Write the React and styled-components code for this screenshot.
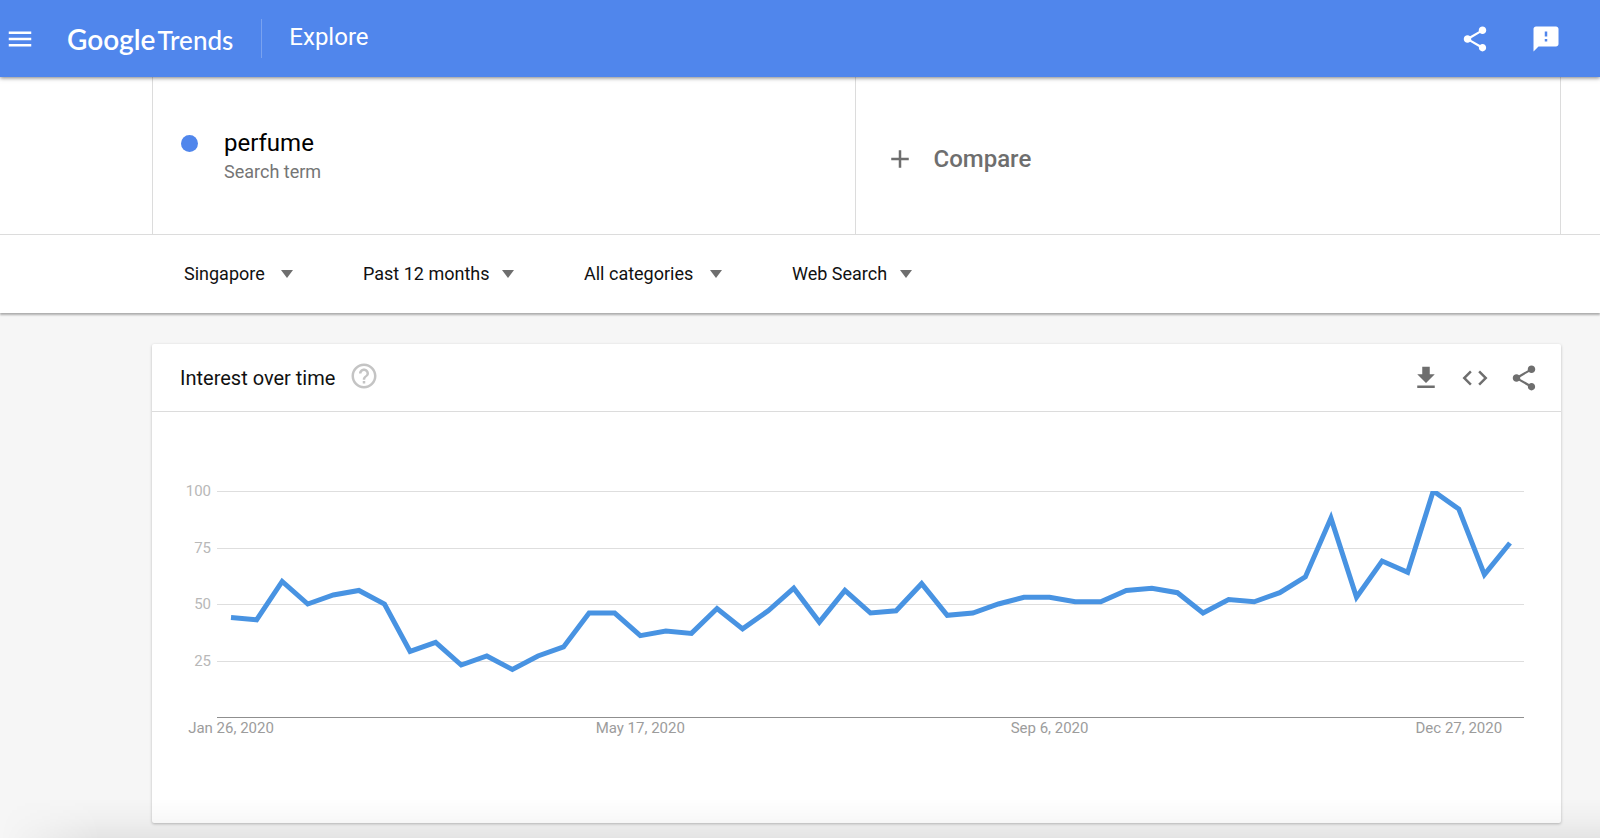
import React from "react";
import {
  MdAdd,
  MdCode,
  MdFeedback,
  MdFileDownload,
  MdHelpOutline,
  MdMenu,
  MdShare
} from "react-icons/md";
import styled, { createGlobalStyle } from "styled-components";

const GlobalStyle = createGlobalStyle`
  * {
    box-sizing: border-box;
  }

  body {
    margin: 0;
    background: #f6f6f6;
    color: #111;
    font-family: Roboto, "Liberation Sans", sans-serif;
  }
`;

const Page = styled.div`
  min-height: 100vh;
`;

const Header = styled.header`
  position: relative;
  display: flex;
  align-items: center;
  height: 77px;
  padding: 0 39px 0 5px;
  background: #5086ec;
  color: #fff;
  box-shadow: 0 1px 4px rgba(0, 0, 0, 0.5);
`;

const IconButton = styled.button`
  display: flex;
  padding: 0;
  border: 0;
  background: none;
  color: inherit;
  font-size: 30px;
  cursor: pointer;
`;

const Logo = styled.a`
  display: flex;
  align-items: baseline;
  gap: 2px;
  margin-left: 32px;
  color: inherit;
  font-family: Lato, sans-serif;
  font-size: 26px;
  font-weight: 500;
  text-decoration: none;
`;

const LogoName = styled.span`
  font-size: 28px;
  font-weight: 600;
`;

const PageTitle = styled.h1`
  display: flex;
  align-items: center;
  height: 39px;
  margin: 0 auto 0 28px;
  padding: 0 0 4px 27px;
  border-left: 1px solid #79a2f0;
  font-size: 24px;
  font-weight: 400;
`;

const Actions = styled.div`
  display: flex;
  gap: ${({ $gap }) => $gap}px;
`;

const Controls = styled.section`
  background: #fff;
  box-shadow: 0 2px 2px rgba(0, 0, 0, 0.3);
`;

const Terms = styled.div`
  display: grid;
  grid-template-columns: calc(50% - 2px) 1fr;
  padding: 0 39px 0 152px;
  border-bottom: 1px solid #dcdcdc;
`;

const Term = styled.div`
  display: flex;
  gap: 26px;
  min-height: 157px;
  padding: 51px 28px 48px;
  border-left: 1px solid #dcdcdc;
`;

const Dot = styled.span`
  width: 17px;
  height: 17px;
  margin-top: 7px;
  border-radius: 50%;
  background: #5086ec;
`;

const TermName = styled.div`
  color: #000;
  font-size: 24px;
  line-height: 30px;
`;

const TermKind = styled.div`
  color: #757575;
  font-size: 18px;
  line-height: 28px;
`;

const CompareButton = styled.button`
  display: flex;
  align-items: center;
  gap: 19px;
  padding: 6px 29px 0;
  border: 0;
  border-left: 1px solid #dcdcdc;
  border-right: 1px solid #dcdcdc;
  background: none;
  color: #6e6e6e;
  font-family: inherit;
  font-size: 24px;
  font-weight: 500;
  cursor: pointer;
`;

const Filters = styled.div`
  display: flex;
  align-items: center;
  flex-wrap: wrap;
  gap: 70px;
  min-height: 78px;
  padding: 0 39px 0 184px;
`;

const Filter = styled.label`
  display: flex;
  align-items: center;
  gap: ${({ $wide }) => ($wide ? 16 : 12)}px;
  color: #6e6e6e;
`;

const Select = styled.select`
  appearance: none;
  padding: 0;
  border: 0;
  background: none;
  color: #111;
  font-family: inherit;
  font-size: 18px;
  line-height: 28px;
`;

const Card = styled.section`
  margin: 31px 39px 15px 152px;
  border-radius: 2px;
  background: #fff;
  box-shadow: 0 1px 3px rgba(0, 0, 0, 0.25);
`;

const CardHeader = styled.div`
  display: flex;
  align-items: center;
  gap: 14px;
  min-height: 68px;
  padding: 0 22px 0 28px;
  border-bottom: 1px solid #dcdcdc;
  color: #6e6e6e;
`;

const CardTitle = styled.h2`
  margin: 0;
  color: #111;
  font-size: 20px;
  font-weight: 400;
`;

const HelpButton = styled(IconButton)`
  margin: 0 auto 4px 0;
  color: #c4c4c4;
`;

const CardBody = styled.div`
  padding: 79px 37px 80px 65px;
`;

const Chart = styled.svg`
  display: block;
  width: 100%;
  height: 252px;
  overflow: visible;
`;

const GridLine = styled.line`
  stroke: ${({ $axis }) => ($axis ? "#8f8f8f" : "#dedede")};
  shape-rendering: crispEdges;
`;

const AxisLabel = styled.text`
  fill: ${({ $muted }) => ($muted ? "#b8b8b8" : "#9c9c9c")};
  font-size: 15px;
`;

// soft fade along the bottom edge of the window
const BottomShade = styled.div`
  position: fixed;
  right: 0;
  bottom: 0;
  left: 0;
  height: 40px;
  background: linear-gradient(
    transparent,
    rgba(0, 0, 0, 0.025) 50%,
    rgba(0, 0, 0, 0.07)
  );
  mask-image: linear-gradient(to right, transparent, #000 100px);
  pointer-events: none;
`;

const filters = [
  { name: "Region", value: "Singapore", wide: true },
  { name: "Time range", value: "Past 12 months" },
  { name: "Category", value: "All categories", wide: true },
  { name: "Search type", value: "Web Search" }
];

// weekly values
const interest = [
  44, 43, 60, 50, 54, 56, 50, 29, 33, 23, 27, 21, 27, 31, 46, 46, 36,
  38, 37, 48, 39, 47, 57, 42, 56, 46, 47, 59, 45, 46, 50, 53, 53, 51,
  51, 56, 57, 55, 46, 52, 51, 55, 62, 88, 53, 69, 64, 100, 92, 63, 77
];

const dates = [
  { week: 0, text: "Jan 26, 2020" },
  { week: 16, text: "May 17, 2020" },
  { week: 32, text: "Sep 6, 2020" },
  { week: 48, text: "Dec 27, 2020" }
];

const PLOT_WIDTH = 1307;
const PLOT_HEIGHT = 226;
const PLOT_INSET = 14;

const xOf = week =>
  PLOT_INSET +
  (week * (PLOT_WIDTH - 2 * PLOT_INSET)) / (interest.length - 1);
const yOf = value => Math.round(PLOT_HEIGHT * (1 - value / 100));

const points = interest
  .map((value, week) => `${xOf(week)},${PLOT_HEIGHT * (1 - value / 100)}`)
  .join(" ");

const InterestChart = () => (
  <Chart role="img" aria-label="Interest over time for perfume">
    {[100, 75, 50, 25, 0].map(value => (
      <GridLine
        key={value}
        $axis={value === 0}
        x1="0"
        x2="100%"
        y1={yOf(value)}
        y2={yOf(value)}
      />
    ))}
    {[100, 75, 50, 25].map(value => (
      <AxisLabel
        key={value}
        $muted
        x="-6"
        y={yOf(value) + 5}
        textAnchor="end"
      >
        {value}
      </AxisLabel>
    ))}
    <svg
      width="100%"
      height={PLOT_HEIGHT}
      viewBox={`0 0 ${PLOT_WIDTH} ${PLOT_HEIGHT}`}
      preserveAspectRatio="none"
    >
      <polyline
        points={points}
        fill="none"
        stroke="#4893e2"
        strokeWidth="5"
        vectorEffect="non-scaling-stroke"
      />
    </svg>
    {dates.map(({ week, text }) => (
      <AxisLabel
        key={text}
        x={`${(xOf(week) / PLOT_WIDTH) * 100}%`}
        y={PLOT_HEIGHT + 16}
        textAnchor="middle"
      >
        {text}
      </AxisLabel>
    ))}
  </Chart>
);

const Caret = () => (
  <svg width="12" height="8" viewBox="0 0 12 8" aria-hidden="true">
    <path d="M0 0h12L6 8z" fill="currentColor" />
  </svg>
);

export default () => (
  <Page>
    <GlobalStyle />
    <Header>
      <IconButton aria-label="Main menu">
        <MdMenu />
      </IconButton>
      <Logo href="#home">
        <LogoName>Google</LogoName>
        <span>Trends</span>
      </Logo>
      <PageTitle>Explore</PageTitle>
      <Actions $gap={41}>
        <IconButton aria-label="Share">
          <MdShare />
        </IconButton>
        <IconButton aria-label="Send feedback">
          <MdFeedback />
        </IconButton>
      </Actions>
    </Header>
    <Controls>
      <Terms>
        <Term>
          <Dot />
          <div>
            <TermName>perfume</TermName>
            <TermKind>Search term</TermKind>
          </div>
        </Term>
        <CompareButton>
          <MdAdd size={30} />
          Compare
        </CompareButton>
      </Terms>
      <Filters>
        {filters.map(({ name, value, wide }) => (
          <Filter key={name} $wide={wide}>
            <Select aria-label={name}>
              <option>{value}</option>
            </Select>
            <Caret />
          </Filter>
        ))}
      </Filters>
    </Controls>
    <Card>
      <CardHeader>
        <CardTitle>Interest over time</CardTitle>
        <HelpButton aria-label="Help">
          <MdHelpOutline />
        </HelpButton>
        <Actions $gap={19}>
          <IconButton aria-label="Download CSV">
            <MdFileDownload />
          </IconButton>
          <IconButton aria-label="Embed">
            <MdCode />
          </IconButton>
          <IconButton aria-label="Share chart">
            <MdShare />
          </IconButton>
        </Actions>
      </CardHeader>
      <CardBody>
        <InterestChart />
      </CardBody>
    </Card>
    <BottomShade />
  </Page>
);
